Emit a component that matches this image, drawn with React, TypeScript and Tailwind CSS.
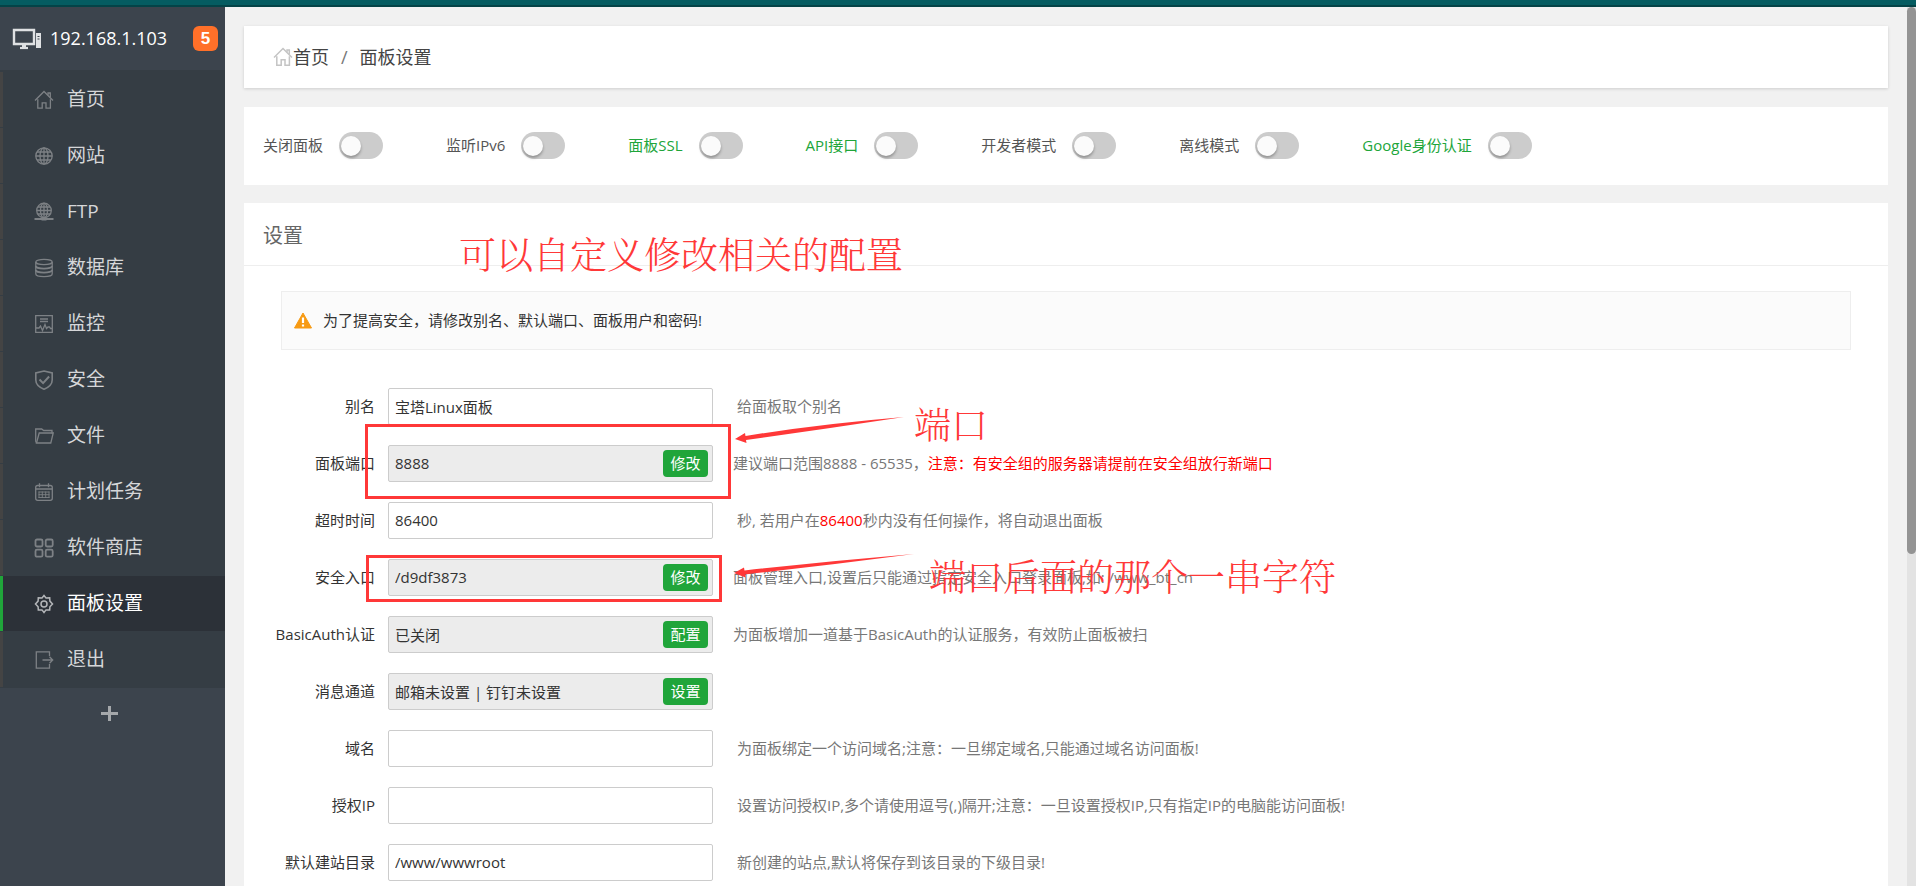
import { useState } from 'react'
import type { ReactNode } from 'react'

function MenuIcon({ children }: { children: ReactNode }) {
  return (
    <svg
      className="h-5 w-5 shrink-0"
      viewBox="0 0 20 20"
      fill="none"
      stroke="currentColor"
      strokeWidth="1.3"
    >
      {children}
    </svg>
  )
}

const homePaths = (
  <>
    <path d="M1 10.5 10 1.5l9 9" />
    <path d="M14 5.2V3h2.3v4.6" />
    <path d="M3.8 9.2v9h4.4v-5.4h3.8v5.4h4.4v-9" />
  </>
)

const menus: { name: string; icon: ReactNode }[] = [
  { name: '首页', icon: homePaths },
  {
    name: '网站',
    icon: (
      <>
        <circle cx="10" cy="10" r="8.2" />
        <ellipse cx="10" cy="10" rx="4" ry="8.2" />
        <path d="M10 1.8v16.4M1.8 10h16.4M3 6h14M3 14h14" />
      </>
    ),
  },
  {
    name: 'FTP',
    icon: (
      <>
        <circle cx="10" cy="8.5" r="7.3" />
        <ellipse cx="10" cy="8.5" rx="3.5" ry="7.3" />
        <path d="M10 1.2v14.6M2.7 8.5h14.6M4 5h12M4 12h12" />
        <path d="M0.5 17h19M7.5 17.4h5" strokeWidth="2" />
      </>
    ),
  },
  {
    name: '数据库',
    icon: (
      <>
        <ellipse cx="10" cy="4" rx="8.2" ry="2.6" />
        <path d="M1.8 4v12c0 1.5 3.7 2.6 8.2 2.6s8.2-1.1 8.2-2.6V4" />
        <path
          d="M1.8 8c0 1.5 3.7 2.6 8.2 2.6s8.2-1.1 8.2-2.6M1.8 12c0 1.5 3.7 2.6 8.2 2.6s8.2-1.1 8.2-2.6"
          strokeWidth="1.8"
        />
      </>
    ),
  },
  {
    name: '监控',
    icon: (
      <>
        <path d="M1.7 1.7h16.6v16.6H1.7z" />
        <path d="M6 5h8M6 7.5h8" />
        <path d="M2 14h3l1.5-2 2 4.5 2.5-6 1.5 4 1.5-1.5h1.5l1 1.5H18" />
      </>
    ),
  },
  {
    name: '安全',
    icon: (
      <>
        <path d="M10 1 18.2 3v7c0 4.5-4 7.5-8.2 9.3C5.8 17.5 1.8 14.5 1.8 10V3z" strokeWidth="1.6" />
        <path d="m5.5 9.5 3.6 3.6 6-6.6" strokeWidth="2" />
      </>
    ),
  },
  {
    name: '文件',
    icon: (
      <>
        <path d="M2.5 17 1.7 15V3h6l2 1.5H18v3" />
        <path d="M5.2 7h14L16.8 17H2.5z" />
      </>
    ),
  },
  {
    name: '计划任务',
    icon: (
      <>
        <rect x="1.7" y="3.5" width="16.6" height="14.8" rx="2" />
        <path d="M5.5 1.3v4M14.5 1.3v4M1.7 7h16.6" />
        <path
          d="M5 9.5V16M8.3 9.5V16M11.7 9.5V16M15 9.5V16M4.5 10h11M4.5 12.7h11M4.5 15.5h11"
          strokeWidth="0.9"
        />
      </>
    ),
  },
  {
    name: '软件商店',
    icon: (
      <g strokeWidth="1.8">
        <rect x="1.5" y="1.5" width="7" height="7" rx="1.5" />
        <rect x="11.7" y="1.5" width="7" height="7" rx="1.5" />
        <rect x="1.5" y="11.7" width="7" height="7" rx="1.5" />
        <rect x="11.7" y="11.7" width="7" height="7" rx="1.5" />
      </g>
    ),
  },
  {
    name: '面板设置',
    icon: (
      <g strokeWidth="1.5">
        <path d="m10 1.5 2 2.4 3.7-.2.2 3.4 2.6 2.9-2.6 2.7-.2 3.3-3.7-.1-2 2.6-2-2.6-3.7.1-.2-3.3L1.5 10l2.6-2.9.2-3.4 3.7.2z" />
        <circle cx="10" cy="10" r="3" />
      </g>
    ),
  },
  {
    name: '退出',
    icon: (
      <>
        <path d="M15.5 6V1.8H2.3v16.4h13.2V14" />
        <path d="M8.5 10h10M15.5 6.8l3.2 3.2-3.2 3.2" />
      </>
    ),
  },
]

const switches = [
  { name: '关闭面板' },
  { name: '监听IPv6' },
  { name: '面板SSL', green: true },
  { name: 'API接口', green: true },
  { name: '开发者模式' },
  { name: '离线模式' },
  { name: 'Google身份认证', green: true },
]

const rows: { id: string; label: string; value: string; action?: string; tip?: ReactNode }[] = [
  { id: 'alias', label: '别名', value: '宝塔Linux面板', tip: '给面板取个别名' },
  {
    id: 'port',
    label: '面板端口',
    value: '8888',
    action: '修改',
    tip: (
      <>
        建议端口范围8888 - 65535，
        <span className="text-[#ff0000]">注意：有安全组的服务器请提前在安全组放行新端口</span>
      </>
    ),
  },
  {
    id: 'timeout',
    label: '超时时间',
    value: '86400',
    tip: (
      <>
        秒, 若用户在<span className="text-[#ff0000]">86400</span>秒内没有任何操作，将自动退出面板
      </>
    ),
  },
  {
    id: 'entrance',
    label: '安全入口',
    value: '/d9df3873',
    action: '修改',
    tip: '面板管理入口,设置后只能通过指定安全入口登录面板,如: /www_bt_cn',
  },
  {
    id: 'basic',
    label: 'BasicAuth认证',
    value: '已关闭',
    action: '配置',
    tip: '为面板增加一道基于BasicAuth的认证服务，有效防止面板被扫',
  },
  { id: 'channel', label: '消息通道', value: '邮箱未设置 | 钉钉未设置', action: '设置' },
  { id: 'domain', label: '域名', value: '', tip: '为面板绑定一个访问域名;注意：一旦绑定域名,只能通过域名访问面板!' },
  {
    id: 'ip',
    label: '授权IP',
    value: '',
    tip: '设置访问授权IP,多个请使用逗号(,)隔开;注意：一旦设置授权IP,只有指定IP的电脑能访问面板!',
  },
  { id: 'root', label: '默认建站目录', value: '/www/wwwroot', tip: '新创建的站点,默认将保存到该目录的下级目录!' },
]

function Sidebar() {
  return (
    <aside className="flex w-[225px] shrink-0 flex-col bg-[#3c444d]">
      <div className="flex h-[63px] items-center pr-[7px] pb-px pl-3 text-white">
        <svg className="h-6 w-[30px] shrink-0" viewBox="0 0 30 24" fill="none" stroke="#dfe1e3">
          <path d="M2 4h20v14H2z" strokeWidth="2.4" />
          <path d="M8 22h8" strokeWidth="2.2" />
          <path d="M10 20h4" strokeWidth="2" />
          <path d="M24 7h5v15h-5z" fill="#dfe1e3" stroke="none" />
          <path d="M25.5 10.5h2M25.5 13h2" stroke="#3c444d" />
        </svg>
        <span className="ml-2 text-lg leading-6">192.168.1.103</span>
        <span className="ml-auto h-[25px] w-[25px] rounded-md bg-[#ff7029] text-center font-['Liberation_Sans',sans-serif] text-[17px] leading-[25px] font-bold">
          5
        </span>
      </div>
      <nav className="bg-[#353d44] pt-0.5">
        {menus.map((item) => (
          <a
            key={item.name}
            href="#"
            className={
              item.name === '面板设置'
                ? 'mb-px flex h-[55px] items-center gap-[13px] border-l-[3px] border-[#20a53a] bg-[#2c3138] pl-[31px] text-[19px] text-white [&>svg]:text-[#b4b6b9]'
                : 'mb-px flex h-[55px] items-center gap-[13px] border-l-[3px] border-[#444444] pl-[31px] text-[19px] text-[#d6d7d9] [&>svg]:text-[#7d8185]'
            }
          >
            <MenuIcon>{item.icon}</MenuIcon>
            <span>{item.name}</span>
          </a>
        ))}
      </nav>
      <button aria-label="添加" className="mt-[17px] ml-[101px] h-[17px] w-[17px] text-[#a5a8ab]">
        <svg viewBox="0 0 17 17" stroke="currentColor" strokeWidth="3">
          <path d="M8.5 1v15M0 8.5h17" />
        </svg>
      </button>
    </aside>
  )
}

function Switch({ name, green }: { name: string; green?: boolean }) {
  const [checked, setChecked] = useState(false)

  return (
    <label className="flex items-center gap-4">
      <span className={green ? 'text-[#20a53a]' : 'text-[#555555]'}>{name}</span>
      <input
        type="checkbox"
        checked={checked}
        onChange={(e) => setChecked(e.target.checked)}
        className="flex h-[27px] w-11 appearance-none items-center rounded-full bg-[#cccccc] px-0.5 before:h-5 before:w-5 before:rounded-full before:bg-[#fbfbfb] before:shadow-[0_2px_3px_rgba(0,0,0,0.3)] checked:justify-end checked:bg-[#20a53a]"
      />
    </label>
  )
}

// 标注层，浮在页面内容之上
function Annotations() {
  return (
    <div className="pointer-events-none absolute inset-0 font-['Noto_Serif_CJK_SC','Liberation_Serif','Noto_Sans_CJK_SC',serif] text-[37px] leading-[48px] font-light whitespace-nowrap text-[#ff3838]">
      <p className="absolute top-[229px] left-[459px]">可以自定义修改相关的配置</p>
      <div className="absolute top-[424px] left-[365px] h-[75px] w-[366px] border-3 border-[#ff3838]" />
      <div className="absolute top-[555px] left-[366px] h-[47px] w-[356px] border-3 border-[#ff3838]" />
      <svg className="absolute top-[410px] left-[730px]" width="200" height="40" fill="#ff3838">
        <path d="M5 29 15 23l.5 3Q90 14 174 7 95 19 16 30l.5 3z" />
      </svg>
      <svg className="absolute top-[545px] left-[730px]" width="200" height="40" fill="#ff3838">
        <path d="M4 28 14 22.5l.5 3Q100 16 184 9 100 20 15 29.5l.5 3z" />
      </svg>
      <p className="absolute top-[399px] left-[914px]">端口</p>
      <p className="absolute top-[551px] left-[929px]">端口后面的那个一串字符</p>
    </div>
  )
}

export default function App() {
  return (
    <div className="relative flex h-screen flex-col overflow-hidden bg-[#f1f1f1] font-['Open_Sans','Noto_Sans_CJK_SC',sans-serif] text-[15px] text-[#333333]">
      <div className="h-[7px] shrink-0 border-b-2 border-[#044347] bg-[#055c61]" />
      <div className="flex min-h-0 flex-1">
        <Sidebar />
        <main className="min-w-0 flex-1 overflow-hidden px-[19px] pt-[19px]">
          <nav className="flex h-[62px] items-center bg-white pl-[29px] text-lg text-[#444444] shadow-[0_1px_3px_rgba(0,0,0,0.15)]">
            <svg
              className="h-5 w-5 text-[#c4c4c4]"
              viewBox="0 0 20 20"
              fill="none"
              stroke="currentColor"
              strokeWidth="1.5"
            >
              {homePaths}
            </svg>
            <a href="#">首页</a>
            <span className="px-3 text-[#777777]">/</span>
            <span>面板设置</span>
          </nav>

          <section className="mt-[19px] flex h-[78px] items-center gap-[63px] bg-white px-[19px] pb-px whitespace-nowrap">
            {switches.map((s) => (
              <Switch key={s.name} {...s} />
            ))}
          </section>

          <section className="mt-[18px] bg-white pb-10">
            <h1 className="h-[63px] border-b border-[#eeeeee] pl-[19px] text-xl leading-[66px] text-[#666666]">设置</h1>
            <div className="mx-[37px] mt-[25px] flex h-[59px] items-center border border-[#eeeeee] bg-[#fbfbfb] pl-3">
              <svg className="mr-[11px] h-[18px] w-[18px]" viewBox="0 0 18 18">
                <path d="M9 1 17.5 16H.5z" fill="#f79a13" stroke="#f79a13" strokeLinejoin="round" />
                <path d="M9 5.5V11M9 12.5v2" stroke="#fff" strokeWidth="2.2" />
              </svg>
              <span>为了提高安全，请修改别名、默认端口、面板用户和密码!</span>
            </div>
            <form className="mt-[37px] flex flex-col gap-[19px]" onSubmit={(e) => e.preventDefault()}>
              {rows.map((row) => (
                <div key={row.id} className="flex h-[38px] items-center">
                  <label htmlFor={row.id} className="w-[131px] shrink-0 text-right">
                    {row.label}
                  </label>
                  <div className="relative ml-[13px] shrink-0">
                    <input
                      id={row.id}
                      type="text"
                      defaultValue={row.value}
                      readOnly={!!row.action}
                      className="block h-[37px] w-[325px] rounded-xs border border-[#cccccc] bg-white px-1.5 text-[#333333] read-only:bg-[#ececec]"
                    />
                    {row.action && (
                      <button
                        type="button"
                        className="absolute top-[5px] right-[5px] h-[27px] w-[45px] rounded bg-[#20a53a] text-white"
                      >
                        {row.action}
                      </button>
                    )}
                  </div>
                  <span
                    className={
                      row.action ? 'ml-5 whitespace-nowrap text-[#777777]' : 'ml-6 whitespace-nowrap text-[#777777]'
                    }
                  >
                    {row.tip}
                  </span>
                </div>
              ))}
            </form>
          </section>
        </main>
        <div className="w-[9px] shrink-0 bg-[#e3e3e3]">
          <div className="h-[547px] rounded-full bg-[#949494]" />
        </div>
      </div>
      <Annotations />
    </div>
  )
}
